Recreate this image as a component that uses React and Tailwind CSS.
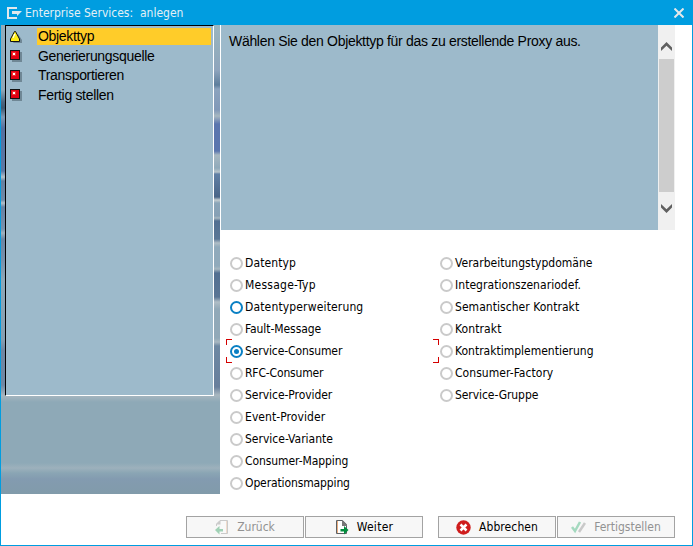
import React from 'react';

const UI = "font-['DejaVu_Sans_Condensed','DejaVu_Sans',sans-serif] [font-stretch:condensed]";

// [label, tracking class, state]
const leftTypes = [
  ['Datentyp', 'tracking-[0.1px]'],
  ['Message-Typ', 'tracking-[0.25px]'],
  ['Datentyperweiterung', 'tracking-[0.15px]', 'hover'],
  ['Fault-Message', 'tracking-[-0.07px]'],
  ['Service-Consumer', 'tracking-[-0.1px]', 'selected'],
  ['RFC-Consumer', 'tracking-[-0.15px]'],
  ['Service-Provider', 'tracking-[-0.06px]'],
  ['Event-Provider', 'tracking-[0.07px]'],
  ['Service-Variante', 'tracking-normal'],
  ['Consumer-Mapping', 'tracking-[-0.08px]'],
  ['Operationsmapping', 'tracking-[-0.12px]'],
];
const rightTypes = [
  ['Verarbeitungstypdomäne', 'tracking-[0.02px]'],
  ['Integrationszenariodef.', 'tracking-[0.05px]'],
  ['Semantischer Kontrakt', 'tracking-[0.04px]'],
  ['Kontrakt', 'tracking-[0.1px]'],
  ['Kontraktimplementierung', 'tracking-normal'],
  ['Consumer-Factory', 'tracking-[0.05px]'],
  ['Service-Gruppe', 'tracking-[-0.07px]'],
];

function Radio({ label, tracking, state }) {
  const ring = state ? 'border-[#0a80c4]' : 'border-[#cacaca]';
  return (
    <div className="relative flex h-[22px] items-center">
      <span className={`flex size-[13px] shrink-0 items-center justify-center rounded-full border-2 ${ring}`}>
        {state === 'selected' && <span className="size-[5px] rounded-full bg-[#0a80c4]" />}
      </span>
      <span className={`ml-[2px] whitespace-nowrap ${tracking}`}>{label}</span>
      {state === 'selected' && (
        <svg className="absolute -left-[4px] -top-px" width="213" height="24" fill="#d40000">
          <path d="M0 0h6v1H1v5H0zM0 24h6v-1H1v-5H0zM213 0h-6v1h5v5h1zM213 24h-6v-1h5v-5h1z" />
        </svg>
      )}
    </div>
  );
}

function Step({ label, active }) {
  return (
    <div className="flex h-[19.5px] items-center">
      <svg width="14" height="14" className="ml-[3px] shrink-0">
        {active ? (
          <>
            <path d="M4 13h9V10L9 4z" fill="#6f8795" />
            <path d="M5.500 1.500h1L10.500 9v2.500h-9V9z" fill="#ffee18" stroke="#111" />
            <path d="M5 4h1.500L4.500 8H3.500z" fill="#fff" />
          </>
        ) : (
          <>
            <path d="M3 3h10v10H3z" fill="#6f8795" />
            <rect x="1.500" y="1.500" width="9" height="9" fill="#e00012" stroke="#111" />
            <path d="M3 3h4v4H3z" fill="#f03030" />
            <path d="M4 4h2v2H4z" fill="#fff" />
          </>
        )}
      </svg>
      <span className={`ml-[14px] h-[17px] w-[174px] pl-px leading-[17px] ${active ? 'bg-[#ffcc29]' : ''}`}>{label}</span>
    </div>
  );
}

function PageIcon({ back }) {
  return (
    <svg width="14" height="16" className={back ? 'opacity-35' : ''}>
      {back ? (
        <>
          <path d="M5 1.500h7.500v13H6M1.500 7V5L5 1.500" fill="#fff" stroke="#777" />
          <path d="M1 5.500 5.500 1v4.500z" fill="#777" />
          <path d="M11.500 2v12" stroke="#e8ad80" />
          <path d="M0 11 4.500 7v3H8v2.500H4.500v3z" fill="#008c3c" />
        </>
      ) : (
        <>
          <path d="M1.500 1.500h6l4 4v9h-10z" fill="#fff" stroke="#5c6064" />
          <path d="M2.500 2v12" stroke="#e8ad80" />
          <path d="M7 1.500h1l4 4V7H7z" fill="#777" />
          <path d="M5.500 10h3.500V7l4.500 4L9 15.500v-3H5.500z" fill="#008c3c" />
        </>
      )}
    </svg>
  );
}

function Btn({ children, disabled }) {
  return (
    <button className={`flex h-[22px] w-[118px] items-center justify-center border border-[#a3a3a3] bg-[#f7f7f7] ${disabled ? 'text-[#929292]' : 'text-black'}`}>
      {children}
    </button>
  );
}

export default function App() {
  return (
    <div className={`flex h-[546px] w-[693px] flex-col overflow-hidden border border-t-0 border-[#009de0] bg-white text-[12px] leading-[16px] text-black ${UI}`}>
      <header className="flex h-[25px] shrink-0 items-center bg-[#009de0] text-[#e4f0f5]">
        <svg width="16" height="12" className="ml-[6px]">
          <path d="M10 1H1v10h9" fill="none" stroke="#e0e8ec" strokeWidth="2" />
          <path d="M5 4h10L10 9V7H5z" fill="#e0e8ec" />
        </svg>
        <span className="ml-[2px] whitespace-pre text-[12px]">Enterprise Services:  anlegen</span>
        <svg width="10" height="10" className="ml-auto mr-[8px] mt-px" stroke="#e4e8ea" strokeWidth="2">
          <path d="m.5.500 9 9m0-9-9 9" />
        </svg>
      </header>
      <div className="flex h-[469px] shrink-0">
        <aside className="flex h-full w-[219px] shrink-0 bg-[linear-gradient(#9bb5bf_0,#93adbd_25px,#8fa5bd_45px,#5d7e9c_60px,#8ba3be_64px,#8199b8_85px,#a7b8c1_91px,#5a76ae_99px,#5a76ae_126px,#a7b8c1_130px,#90aabb_143px,#b8c4ca_147px,#6180a5_149px,#496587_172px,#c4cdd0_175px,#8aa5b8_178px,#86a0b5_191px,#a7b8c1_193px,#526f91_196px,#5a7796_214px,#b0bec6_218px,#90aabb_222px,#90aabb_241px,#a7b8c1_244px,#526f91_248px,#5a7695_272px,#b0bec6_277px,#91a9b8_284px,#91a9b8_313px,#a9b8c1_317px,#6d88a2_321px,#687f9c_362px,#a8b7c0_370px,#8ea9b7_377px,#8ea9b7_438px,#9db1bc_443px,#8aa5b4_448px,#839bb0_454px,#819baa_469px)]">
          <div className="h-[371px] w-[4px] bg-[linear-gradient(#93adbc_0,#8fa7b8_65px,#4c6680_77px,#3f5870_83px,#8099b4_92px,#5570a0_103px,#5c78a4_146px,#b4c1c9_152px,#6580a0_156px,#708aa8_175px,#b4c1c9_178px,#6782a4_182px,#7891ad_204px,#a0b2be_208px,#6c86a4_214px,#7890ab_235px,#8ea7b7_255px,#859eb1_315px,#6f87a3_325px,#7088a4_360px,#a8b7c0_371px)]" />
          <div className="h-[371px] w-[209px] border border-b-white border-l-black border-r-white border-t-black bg-[#9dbacb] pt-px font-['Liberation_Sans',Arial,sans-serif] text-[14px] tracking-[-0.32px]">
            <Step label="Objekttyp" active />
            <Step label="Generierungsquelle" />
            <Step label="Transportieren" />
            <Step label="Fertig stellen" />
          </div>
        </aside>
        <main className="flex flex-col">
          <section className="flex h-[205px] w-[455px] border-l border-white bg-[#9dbacb]">
            <p className="w-[437px] pl-[8px] pt-[8px] font-['Liberation_Sans',Arial,sans-serif] text-[14px] tracking-[-0.31px]">
              Wählen Sie den Objekttyp für das zu erstellende Proxy aus.
            </p>
            <div className="flex w-[17px] flex-col items-center bg-[#f0f0f0]">
              <svg width="11" height="9" className="mt-[17px]" fill="#606060">
                <path d="M5.500 0 11 5.500V9L5.500 3.800 0 9V5.500z" />
              </svg>
              <span className="mt-[8px] h-[133px] w-[15px] bg-[#cdcdcd]" />
              <svg width="11" height="9" className="mt-[12px]" fill="#606060">
                <path d="M5.500 9 11 3.500V0L5.500 5.200 0 0v3.500z" />
              </svg>
            </div>
          </section>
          <section className="flex pl-[10px] pt-[22px]">
            <div className="w-[210px]">
              {leftTypes.map(([label, tracking, state]) => <Radio key={label} label={label} tracking={tracking} state={state} />)}
            </div>
            <div>
              {rightTypes.map(([label, tracking, state]) => <Radio key={label} label={label} tracking={tracking} state={state} />)}
            </div>
          </section>
        </main>
      </div>
      <footer className="flex pl-[185px] pt-[22px]">
        <Btn disabled><PageIcon back /><span className="ml-[8px]">Zurück</span></Btn>
        <span className="w-px" />
        <Btn><PageIcon /><span className="ml-[8px] tracking-[0.3px]">Weiter</span></Btn>
        <span className="w-[15px]" />
        <Btn>
          <svg width="15" height="15"><circle cx="7.500" cy="7.500" r="7.200" fill="#cf1d1d" /><path d="m4.500 4.500 6 6m0-6-6 6" stroke="#fff" strokeWidth="2.500" /></svg>
          <span className="ml-[8px] tracking-[0.1px]">Abbrechen</span>
        </Btn>
        <span className="w-px" />
        <Btn disabled>
          <svg width="15" height="14" fill="none" strokeWidth="2.500"><path d="m1 7 3 4 5-9" stroke="#a4d9bf" /><path d="m8 12 6-9" stroke="#c9c9c9" /></svg>
          <span className="ml-[8px]">Fertigstellen</span>
        </Btn>
      </footer>
    </div>
  );
}
